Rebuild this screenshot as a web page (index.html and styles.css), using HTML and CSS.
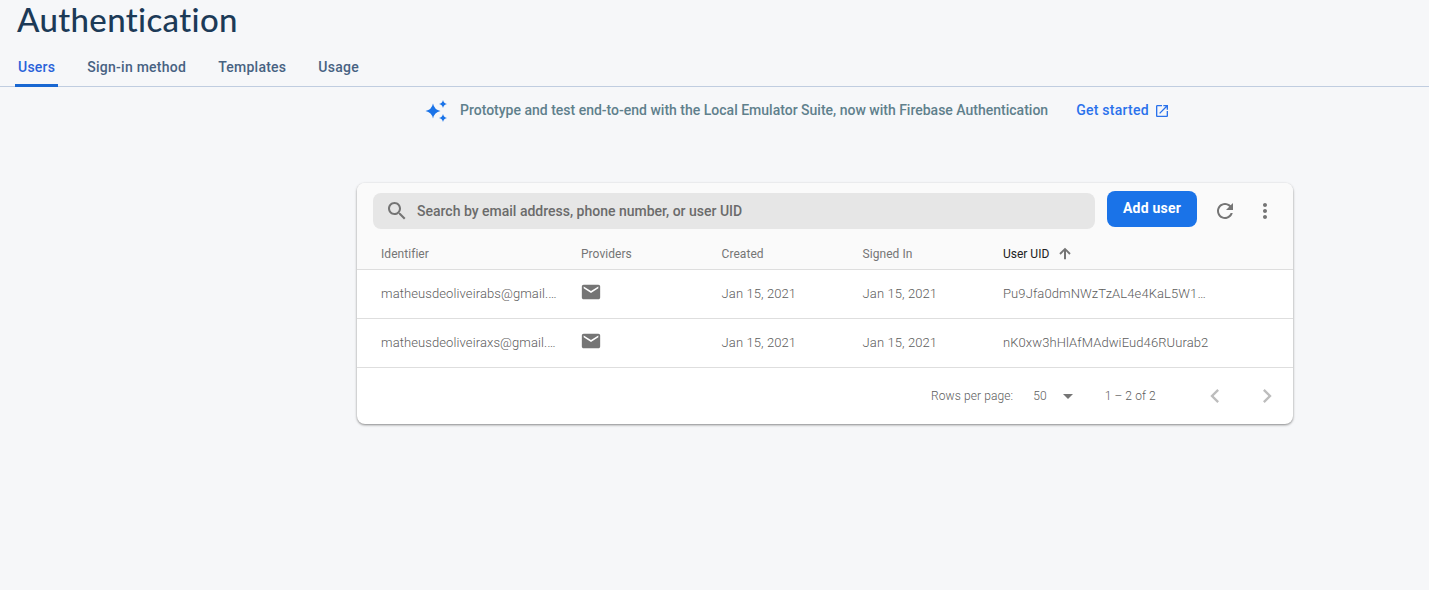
FILE: index.html
```html
<!DOCTYPE html>
<html lang="en">
<head>
<meta charset="utf-8">
<title>Authentication</title>
<link rel="stylesheet" href="styles.css">
</head>
<body>
<header class="header">
  <h1 class="title">Authentication</h1>
  <nav class="tabs">
    <a class="tab active">Users</a>
    <a class="tab">Sign-in method</a>
    <a class="tab">Templates</a>
    <a class="tab">Usage</a>
  </nav>
</header>
<main>
  <div class="banner">
    <svg class="spark" width="24" height="24" viewBox="0 0 24 24"><path d="M9 4.500q1.250 6.250 7.500 7.500q-6.250 1.250-7.500 7.500q-1.250-6.250-7.500-7.500q6.250-1.250 7.500-7.500zM19 1q.7 3.300 4 4q-3.300.7-4 4q-.7-3.300-4-4q3.300-.7 4-4zM19 15q.7 3.300 4 4q-3.300.7-4 4q-.7-3.300-4-4q3.300-.7 4-4z"/></svg>
    <span class="banner-text">Prototype and test end-to-end with the Local Emulator Suite, now with Firebase Authentication</span>
    <a class="link">Get started
      <svg width="16" height="16" viewBox="0 0 24 24"><path d="M19 19H5V5h7V3H5c-1.110 0-2 .9-2 2v14c0 1.100.89 2 2 2h14c1.100 0 2-.9 2-2v-7h-2v7zM14 3v2h3.590l-9.830 9.830 1.410 1.410L19 6.410V10h2V3h-7z"/></svg>
    </a>
  </div>
  <section class="card">
    <div class="toolbar">
      <div class="search">
        <svg width="24" height="24" viewBox="0 0 24 24"><path d="M15.500 14h-.79l-.28-.27C15.410 12.590 16 11.110 16 9.500 16 5.910 13.090 3 9.500 3S3 5.910 3 9.500 5.910 16 9.500 16c1.610 0 3.090-.59 4.230-1.570l.27.28v.79l5 4.990L20.490 19l-4.990-5zm-6 0C7.010 14 5 11.990 5 9.500S7.010 5 9.500 5 14 7.010 14 9.500 11.990 14 9.500 14z"/></svg>
        <span class="search-text">Search by email address, phone number, or user UID</span>
      </div>
      <button class="add">Add user</button>
      <svg class="refresh" width="24" height="24" viewBox="0 0 24 24"><path d="M17.650 6.350C16.200 4.900 14.210 4 12 4c-4.420 0-7.990 3.580-7.990 8s3.570 8 7.990 8c3.730 0 6.840-2.550 7.730-6h-2.080c-.82 2.330-3.040 4-5.650 4-3.310 0-6-2.690-6-6s2.690-6 6-6c1.660 0 3.140.69 4.220 1.780L13 11h7V4l-2.350 2.350z"/></svg>
      <svg class="more" width="24" height="24" viewBox="0 0 24 24"><path d="M12 8c1.100 0 2-.9 2-2s-.9-2-2-2-2 .9-2 2 .9 2 2 2zm0 2c-1.100 0-2 .9-2 2s.9 2 2 2 2-.9 2-2-.9-2-2-2zm0 6c-1.100 0-2 .9-2 2s.9 2 2 2 2-.9 2-2-.9-2-2-2z"/></svg>
    </div>
    <div class="row head">
      <span>Identifier</span><span>Providers</span><span>Created</span><span>Signed In</span>
      <span class="sorted">User UID
        <svg width="16" height="16" viewBox="0 0 24 24"><path d="M3.500 11l2 2L10.500 8v12h3V8l5 5 2-2L12 2.500z"/></svg>
      </span>
    </div>
    <div class="row">
      <span>matheusdeoliveirabs@gmail.…</span>
      <span><svg class="mail" width="22" height="22" viewBox="0 0 24 24"><path d="M20 4H4c-1.100 0-1.990.9-1.990 2L2 18c0 1.100.9 2 2 2h16c1.100 0 2-.9 2-2V6c0-1.100-.9-2-2-2zm0 4l-8 5-8-5V6l8 5 8-5v2z"/></svg></span>
      <span>Jan 15, 2021</span><span>Jan 15, 2021</span>
      <span>Pu9Jfa0dmNWzTzAL4e4KaL5W1…</span>
    </div>
    <div class="row">
      <span>matheusdeoliveiraxs@gmail.…</span>
      <span><svg class="mail" width="22" height="22" viewBox="0 0 24 24"><path d="M20 4H4c-1.100 0-1.990.9-1.990 2L2 18c0 1.100.9 2 2 2h16c1.100 0 2-.9 2-2V6c0-1.100-.9-2-2-2zm0 4l-8 5-8-5V6l8 5 8-5v2z"/></svg></span>
      <span>Jan 15, 2021</span><span>Jan 15, 2021</span>
      <span>nK0xw3hHlAfMAdwiEud46RUurab2</span>
    </div>
    <footer class="pager">
      <span class="rpp">Rows per page:</span>
      <span class="size">50</span>
      <svg class="caret" width="10" height="5" viewBox="0 0 10 5"><path d="M0 0h10L5 5z"/></svg>
      <span class="range">1 – 2 of 2</span>
      <svg class="prev" width="28" height="28" viewBox="0 0 24 24"><path d="M15.410 7.410L14 6l-6 6 6 6 1.410-1.410L10.830 12z"/></svg>
      <svg class="next" width="28" height="28" viewBox="0 0 24 24"><path d="M10 6L8.590 7.410 13.170 12l-4.580 4.590L10 18l6-6z"/></svg>
    </footer>
  </section>
</main>
</body>
</html>
```
FILE: styles.css
```css
* { box-sizing: border-box; }
body {
  margin: 0;
  height: 590px;
  overflow: hidden;
  background: #f6f7f9;
  font-family: Roboto, "Liberation Sans", sans-serif;
  color: #757575;
}
svg { display: block; flex: none; fill: currentColor; }
.header { height: 87px; border-bottom: 1px solid #c0cde0; }
.title {
  margin: 0;
  padding-left: 17px;
  height: 48px;
  font: 500 33px/38px Lato, sans-serif;
  letter-spacing: 0.35px;
  color: #1c3a57;
  white-space: nowrap;
}
.tabs { display: flex; gap: 26px; height: 39px; padding-left: 15px; }
.tab {
  height: 39px;
  padding: 0 3px;
  font-size: 14px;
  font-weight: 500;
  line-height: 38px;
  letter-spacing: 0.25px;
  color: #476282;
}
.tab.active {
  color: #2962d9;
  background: linear-gradient(#1967d2, #1967d2) bottom / 100% 3px no-repeat;
}
.banner {
  display: flex;
  align-items: center;
  height: 48px;
  padding-left: 424px;
  font-size: 14px;
  font-weight: 500;
  white-space: nowrap;
}
.spark { color: #1a73e8; }
.banner-text { margin: 0 0 2px 12px; color: #5f808c; }
.link {
  display: flex;
  align-items: center;
  gap: 5px;
  margin: 0 0 2px 28px;
  color: #2a72ec;
  letter-spacing: 0.25px;
}
.link svg { margin: 2px 0 0; }
.card {
  width: 936px;
  height: 241px;
  margin: 48px 0 0 357px;
  border-radius: 8px;
  overflow: hidden;
  background: #fff;
  box-shadow: 0 1px 3px rgba(0,0,0,.25), 0 1px 2px rgba(0,0,0,.24);
}
.toolbar {
  display: flex;
  height: 56px;
  padding: 8px 16px;
  background: #fafafa;
}
.search {
  display: flex;
  align-items: center;
  width: 722px;
  height: 36px;
  margin-top: 2px;
  padding-left: 12px;
  border-radius: 8px;
  background: #e6e6e6;
}
.search-text { margin-left: 8px; font-size: 14px; font-weight: 500; color: #6b6b6b; }
.add {
  width: 90px;
  height: 36px;
  margin-left: 12px;
  padding: 0 0 2px;
  border: 0;
  border-radius: 8px;
  background: #1a73e8;
  color: #fff;
  font: 700 14px Roboto, sans-serif;
  letter-spacing: 0.2px;
}
.refresh { margin: 8px 0 0 16px; }
.more { margin: 8px 0 0 16px; }
.row {
  display: grid;
  grid-template-columns: 200px 140.600px 141px 140.400px 1fr;
  align-items: center;
  height: 49px;
  padding: 0 24px 2px;
  border-bottom: 1px solid #dedede;
  font-size: 13px;
  font-weight: 300;
  color: #5c5c5c;
  letter-spacing: 0.1px;
  white-space: nowrap;
}
.head {
  height: 31px;
  padding-bottom: 0;
  background: #fafafa;
  font-size: 12px;
  font-weight: 400;
  color: #757575;
  letter-spacing: 0.05px;
}
.sorted { display: flex; align-items: center; gap: 8px; color: #212121; letter-spacing: 0; }
.sorted svg { color: #757575; }
.mail { margin: -2px 0 0 -1px; color: #757575; }
.pager { display: flex; align-items: center; height: 56px; padding-left: 574px; font-size: 12px; white-space: nowrap; }
.pager span { font-weight: 300; color: #5c5c5c; letter-spacing: 0.1px; }
.size { margin-left: 20px; }
.caret { margin-left: 16px; }
.range { margin-left: 32px; }
.prev, .next { color: #bdbdbd; }
.prev { margin-left: 45px; }
.next { margin-left: 24px; }
```
